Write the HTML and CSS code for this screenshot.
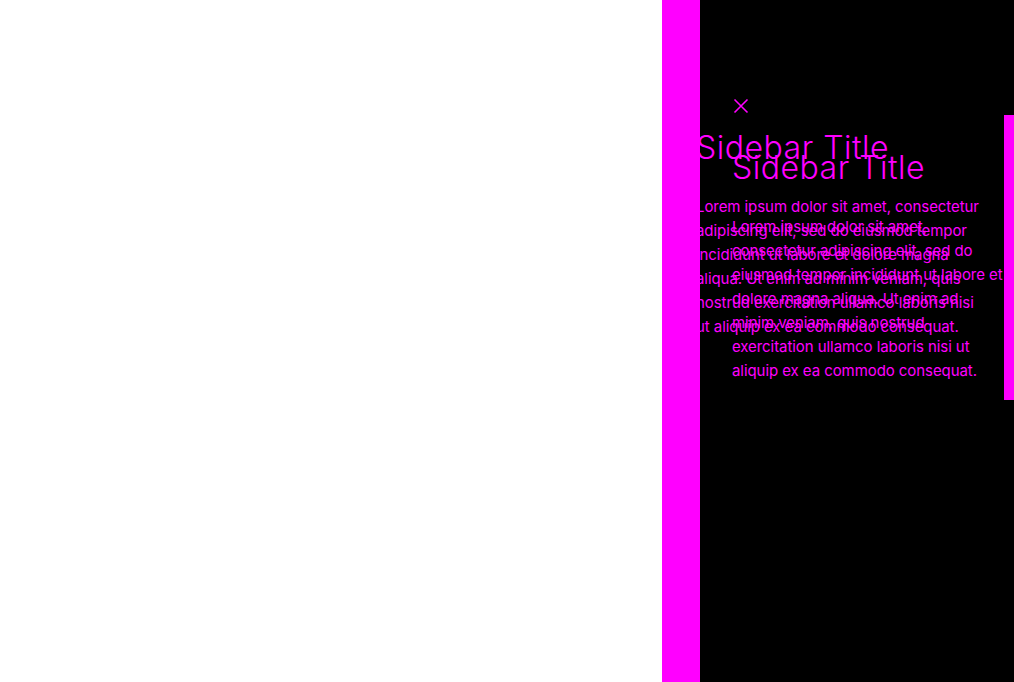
FILE: index.html
```html
<!DOCTYPE html>
<html lang="en">
<head>
<meta charset="utf-8">
<title>Sidebar</title>
<link rel="stylesheet" href="styles.css">
</head>
<body>
<div class="page">
  <main class="main"></main>
  <aside class="sidebar">
    <div class="ghost" aria-hidden="true">
      <h2 class="title">Sidebar Title</h2>
      <p class="text">Lorem ipsum dolor sit amet, consectetur adipiscing elit, sed do eiusmod tempor incididunt ut labore et dolore magna aliqua. Ut enim ad minim veniam, quis nostrud exercitation ullamco laboris nisi ut aliquip ex ea commodo consequat.</p>
    </div>
    <button class="close" type="button" aria-label="Close">
      <svg width="16" height="16" viewBox="0 0 16 16"><path d="M1.5 1.5 L14.5 14.5 M14.5 1.5 L1.5 14.5" stroke="#ff00ff" stroke-width="1.6" fill="none"/></svg>
    </button>
    <h2 class="title">Sidebar Title</h2>
    <p class="text">Lorem ipsum dolor sit amet, consectetur adipiscing elit, sed do eiusmod tempor incididunt ut labore et dolore magna aliqua. Ut enim ad minim veniam, quis nostrud exercitation ullamco laboris nisi ut aliquip ex ea commodo consequat.</p>
    <div class="thumb"></div>
  </aside>
</div>
</body>
</html>
```

FILE: styles.css
```css
html, body {
  margin: 0;
  padding: 0;
  height: 100%;
  background: #ffffff;
}

.page {
  display: flex;
  height: 682px;
  overflow: hidden;
}

.main {
  flex: 1;
  background: #ffffff;
}

.sidebar {
  position: relative;
  box-sizing: content-box;
  width: 272px;
  padding: 98px 10px 0 32px;
  border-left: 38px solid #ff00ff;
  background: #000000;
  color: #ff00ff;
  font-family: Inter, "Liberation Sans", sans-serif;
}

.close {
  display: block;
  margin: 0 0 0 1px;
  padding: 0;
  border: 0;
  background: none;
  width: 16px;
  height: 16px;
  cursor: pointer;
}

.close svg {
  display: block;
}

.title {
  margin: 35px 0 0 0;
  font-family: Inter, "Liberation Sans", sans-serif;
  font-weight: 300;
  font-size: 32px;
  line-height: 37px;
  letter-spacing: 0.5px;
  white-space: nowrap;
}

.text {
  margin: 29px 0 0 0;
  font-size: 15px;
  font-weight: 400;
  line-height: 24px;
  letter-spacing: -0.07px;
}

.ghost {
  position: absolute;
  left: -4px;
  top: 129px;
  width: 288px;
}

.ghost .title {
  margin-top: 0;
}

.thumb {
  position: absolute;
  right: 0;
  top: 115px;
  width: 10px;
  height: 285px;
  background: #ff00ff;
}
```
